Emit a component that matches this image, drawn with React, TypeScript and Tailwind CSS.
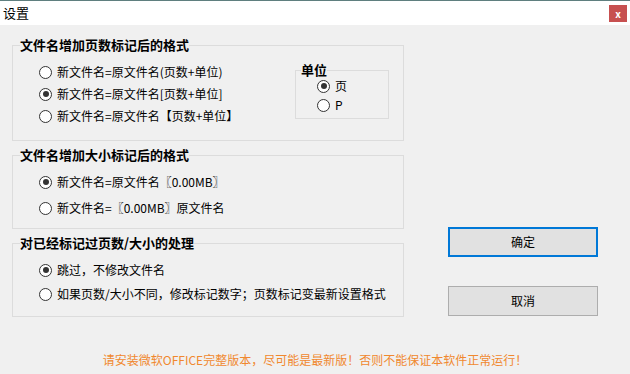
const FONT = '[font-family:"Noto_Sans_CJK_SC","Liberation_Sans",sans-serif]';

function Radio({ label, checked, className = '' }: { label: string; checked?: boolean; className?: string }) {
  return (
    <div className={`flex items-center gap-[5px] ${className}`}>
      <span className="w-[13px] h-[13px] rounded-full border border-[#333] bg-white flex items-center justify-center shrink-0">
        {checked && <span className="w-[6px] h-[6px] rounded-full bg-[#333]" />}
      </span>
      <span className="text-[12px] leading-none text-black whitespace-nowrap">{label}</span>
    </div>
  );
}

function Group({ title, className = '', children }: { title: string; className?: string; children: React.ReactNode }) {
  return (
    <fieldset className={`border border-[#dcdcdc] ${className}`}>
      <legend className="ml-[7px] text-[13px] leading-[18px] font-bold text-black whitespace-nowrap">{title}</legend>
      {children}
    </fieldset>
  );
}

export default function App() {
  return (
    <div className={`w-[630px] h-[374px] bg-[#f0f0f0] flex flex-col overflow-hidden ${FONT}`}>
      <div className="h-[25px] bg-white border-t border-[#5f7f7f] flex items-center justify-between pl-[3px] pr-[3px]">
        <span className="text-[13px] text-black">设置</span>
        <div className="w-[18px] h-[17px] bg-[#c75050] flex items-center justify-center mt-[1px]">
          <span className="text-white text-[10px] font-bold leading-none">x</span>
        </div>
      </div>

      <div className="flex pl-[12px] pt-[11px]">
        <div className="w-[392px] flex flex-col gap-[5px]">
          <Group title="文件名增加页数标记后的格式" className="h-[105px]">
            <div className="flex justify-between pr-[14px]">
              <div className="flex flex-col pl-[26px] pt-[7px]">
                <Radio label="新文件名=原文件名(页数+单位)" className="h-[22px]" />
                <Radio label="新文件名=原文件名[页数+单位]" checked className="h-[22px]" />
                <Radio label="新文件名=原文件名【页数+单位】" className="h-[22px]" />
              </div>
              <fieldset className="mt-[9px] w-[94px] h-[56px] border border-[#dcdcdc]">
                <legend className="ml-[5px] text-[13px] leading-[14px] font-bold text-black">单位</legend>
                <div className="flex flex-col gap-[1px] pl-[21px]">
                  <Radio label="页" checked className="h-[18px]" />
                  <Radio label="P" className="h-[18px]" />
                </div>
              </fieldset>
            </div>
          </Group>

          <Group title="文件名增加大小标记后的格式" className="h-[83px]">
            <div className="flex flex-col gap-[4px] pl-[26px] pt-[7px]">
              <Radio label="新文件名=原文件名〖0.00MB〗" checked className="h-[22px]" />
              <Radio label="新文件名=〖0.00MB〗原文件名" className="h-[22px]" />
            </div>
          </Group>

          <Group title="对已经标记过页数/大小的处理" className="h-[83px]">
            <div className="flex flex-col gap-[2px] pl-[26px] pt-[7px]">
              <Radio label="跳过，不修改文件名" checked className="h-[22px]" />
              <Radio label="如果页数/大小不同，修改标记数字；页数标记变最新设置格式" className="h-[22px]" />
            </div>
          </Group>
        </div>

        <div className="ml-[44px] flex flex-col justify-end gap-[29px] pb-[1px]">
          <button className="w-[150px] h-[30px] bg-[#e1e1e1] border-2 border-[#0078d7] text-[12px] text-black">确定</button>
          <button className="w-[150px] h-[30px] bg-[#e1e1e1] border border-[#adadad] text-[12px] text-black">取消</button>
        </div>
      </div>

      <div className="mt-[34px] h-[18px] flex items-center justify-center">
        <span className="text-[12px] text-[#f0882e] whitespace-nowrap">
          请安装微软OFFICE完整版本，尽可能是最新版！否则不能保证本软件正常运行！
        </span>
      </div>
    </div>
  );
}
